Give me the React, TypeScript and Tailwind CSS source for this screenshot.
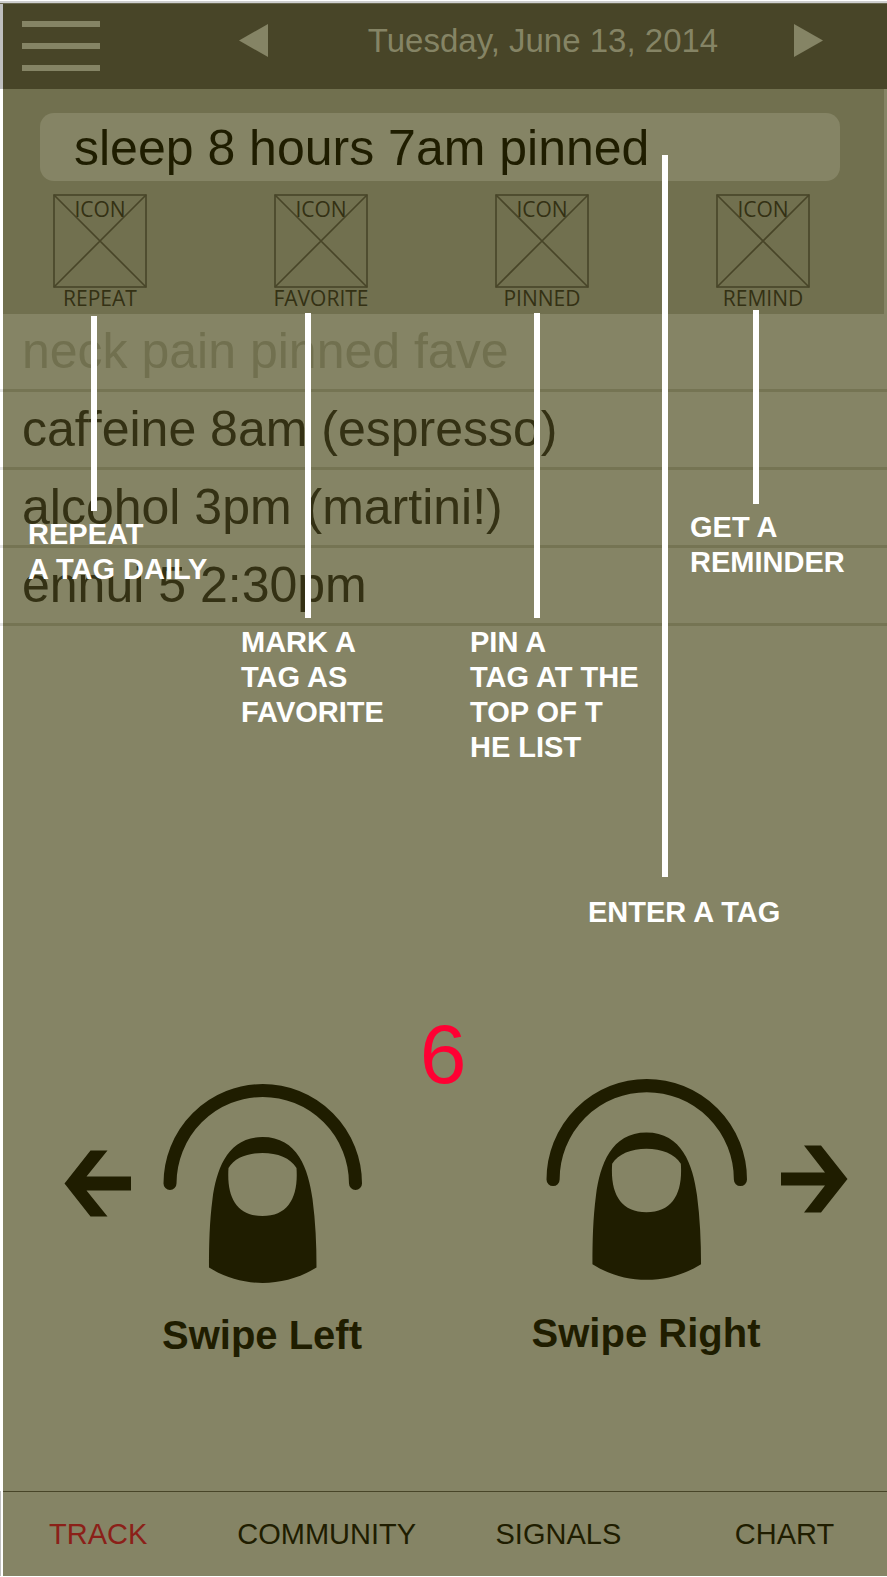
import React from "react";

const tools = ["REPEAT", "FAVORITE", "PINNED", "REMIND"];

const entries = [
  { text: "neck pain pinned fave", tone: "text-[#71704f]" },
  { text: "caffeine 8am (espresso)", tone: "text-[#343114]" },
  { text: "alcohol 3pm (martini!)", tone: "text-[#343114]" },
  { text: "ennui 5 2:30pm", tone: "text-[#343114]" },
];

const tabs = [
  { label: "TRACK", tone: "text-[#8b2018]" },
  { label: "COMMUNITY", tone: "text-[#1f1d00]" },
  { label: "SIGNALS", tone: "text-[#1f1d00]" },
  { label: "CHART", tone: "text-[#1f1d00]" },
];

const pointers = [
  "left-[91px] top-[316px] h-[195px]",
  "left-[305px] top-[313px] h-[305px]",
  "left-[534px] top-[313px] h-[305px]",
  "left-[662px] top-[155px] h-[722px]",
  "left-[753px] top-[310px] h-[194px]",
];

const notes = [
  { place: "left-[28px] top-[517px]", lines: ["REPEAT", "A TAG DAILY"] },
  { place: "left-[241px] top-[625px]", lines: ["MARK A", "TAG AS", "FAVORITE"] },
  { place: "left-[470px] top-[625px]", lines: ["PIN A", "TAG AT THE", "TOP OF T", "HE LIST"] },
  { place: "left-[690px] top-[510px]", lines: ["GET A", "REMINDER"] },
  { place: "left-[588px] top-[895px]", lines: ["ENTER A TAG"] },
];

function Header() {
  return (
    <header className="flex h-[85px] items-start border-l-[3px] border-[#bfbfbf] bg-[#484528] pl-[19px] pr-16">
      <button type="button" aria-label="Menu" className="mt-[17px] flex w-[78px] flex-col gap-4">
        <span className="h-[6px] bg-[#858465]" />
        <span className="h-[6px] bg-[#858465]" />
        <span className="h-[6px] bg-[#858465]" />
      </button>
      <button type="button" aria-label="Previous day" className="ml-[139px] mt-5">
        <svg width="29" height="33" viewBox="0 0 29 33" className="block">
          <path d="M0 16.5 29 0v33z" fill="#858465" />
        </svg>
      </button>
      <p className="mt-[17px] flex-1 pl-6 text-center text-[33px] leading-[40px] text-[#858465]">
        Tuesday, June 13, 2014
      </p>
      <button type="button" aria-label="Next day" className="mt-5">
        <svg width="29" height="33" viewBox="0 0 29 33" className="block">
          <path d="M29 16.5 0 0v33z" fill="#858465" />
        </svg>
      </button>
    </header>
  );
}

function ToolButton({ label }: { label: string }) {
  return (
    <button type="button" className="relative flex w-[94px] flex-col items-center font-['Open_Sans',sans-serif] text-[21px] leading-[24px] text-[#343114]">
      <svg width="94" height="94" viewBox="0 0 94 94" className="block" fill="none" stroke="#484528" strokeWidth="1.6">
        <rect x="1" y="1" width="92" height="92" />
        <path d="M1 1 93 93M93 1 1 93" />
      </svg>
      <span className="absolute inset-x-0 top-[3px] text-center">ICON</span>
      <span className="-mt-0.5 whitespace-nowrap">{label}</span>
    </button>
  );
}

function Entry({ text, tone }: { text: string; tone: string }) {
  return (
    <li>
      <div className={`ml-[3px] bg-[#858465] pl-[19px] text-[50px] leading-[75px] ${tone}`}>{text}</div>
      <div className="flex h-[3px]">
        <span className="w-[3px] bg-[#e6e6e6]" />
        <span className="flex-1 bg-[#757453]" />
      </div>
    </li>
  );
}

function Thumb({ x }: { x: number }) {
  return (
    <g transform={`translate(${x} 0)`}>
      <path d="M6.5 99.5A92.750 93 0 0 1 192 99.500" fill="none" stroke="#1f1d00" strokeWidth="13" strokeLinecap="round" />
      <path
        fillRule="evenodd"
        fill="#1f1d00"
        d="M99 53C134 53 145 85 149 115C152 138 153 160 153 183.500C120 204 78 204 45.500 183.500C45.500 160 46 138 49 115C53 85 64 53 99 53ZM99 69C84 69 71 74 65 84C63 113 73 132 99 132C125 132 135 113 133 84C127 74 114 69 99 69Z"
      />
    </g>
  );
}

function Swipes() {
  return (
    <section className="flex items-start justify-between pl-[61px] pr-[39px] text-[40px] font-bold leading-[44px] text-[#1f1d00]">
      <figure className="mt-[5px] flex flex-col items-end">
        <svg width="298" height="200" viewBox="0 0 298 200" className="block">
          <path d="M0.500 99.500 26.500 66.500H43.500L22.500 92.500H67V106.500H22.500L43.500 132.500H26.500Z" fill="#1f1d00" />
          <Thumb x={99.5} />
        </svg>
        <figcaption className="mt-[29px] flex w-[200px] justify-center whitespace-nowrap">Swipe Left</figcaption>
      </figure>
      <figure className="flex flex-col items-start">
        <svg width="302" height="202" viewBox="0 0 302 202" className="block">
          <path d="M301.500 100 275 66.500H258L279 93.500H235V106.500H279L258 133.500H275Z" fill="#1f1d00" />
          <g transform="scale(1.01)">
            <Thumb x={0.500} />
          </g>
        </svg>
        <figcaption className="mt-[30px] flex w-[200px] justify-center whitespace-nowrap">Swipe Right</figcaption>
      </figure>
    </section>
  );
}

export default function App() {
  return (
    <div className="relative flex min-h-screen flex-col bg-white pb-px font-['Liberation_Sans',Arial,sans-serif]">
      <div className="mt-px h-[2px] bg-[#cfcfcf]" />
      <div className="h-px bg-[#6a6850]" />
      <Header />
      <div className="ml-[3px] bg-[#858465] pr-[3px]">
        <section className="h-[225px] bg-[#71704f] pl-[37px] pr-11 pt-6">
          <input
            aria-label="Tag"
            defaultValue="sleep 8 hours 7am pinned"
            className="block h-[68px] w-full rounded-[14px] bg-[#858465] pl-[34px] pt-0.5 text-[50px] text-[#1f1d00] outline-none"
          />
          <div className="ml-[13px] mr-[30px] mt-[13px] flex justify-between">
            {tools.map((label) => (
              <ToolButton key={label} label={label} />
            ))}
          </div>
        </section>
      </div>
      <ul>
        {entries.map((entry) => (
          <Entry key={entry.text} {...entry} />
        ))}
      </ul>
      <main className="ml-[3px] flex-1 bg-[#858465]">
        <p className="mt-[404px] pr-1 text-center text-[84px] leading-[49px] text-[#ff0033]">6</p>
        <Swipes />
      </main>
      <div className="border-l border-[#bfbfbf] pl-0.5">
        <nav className="grid h-[85px] grid-cols-[188fr_258fr_239fr_152fr] items-center border-t border-[#484528] bg-[#858465] pl-[46px] text-[29px] leading-[34px]">
          {tabs.map((tab) => (
            <a key={tab.label} href="#" className={tab.tone}>
              {tab.label}
            </a>
          ))}
        </nav>
      </div>
      <div className="pointer-events-none absolute inset-0 text-[29px] font-bold leading-[35px] text-white">
        {pointers.map((place) => (
          <span key={place} className={`absolute w-[6px] bg-white ${place}`} />
        ))}
        {notes.map((note) => (
          <p key={note.place} className={`absolute whitespace-nowrap ${note.place}`}>
            {note.lines.map((line) => (
              <span key={line} className="block">
                {line}
              </span>
            ))}
          </p>
        ))}
      </div>
    </div>
  );
}
